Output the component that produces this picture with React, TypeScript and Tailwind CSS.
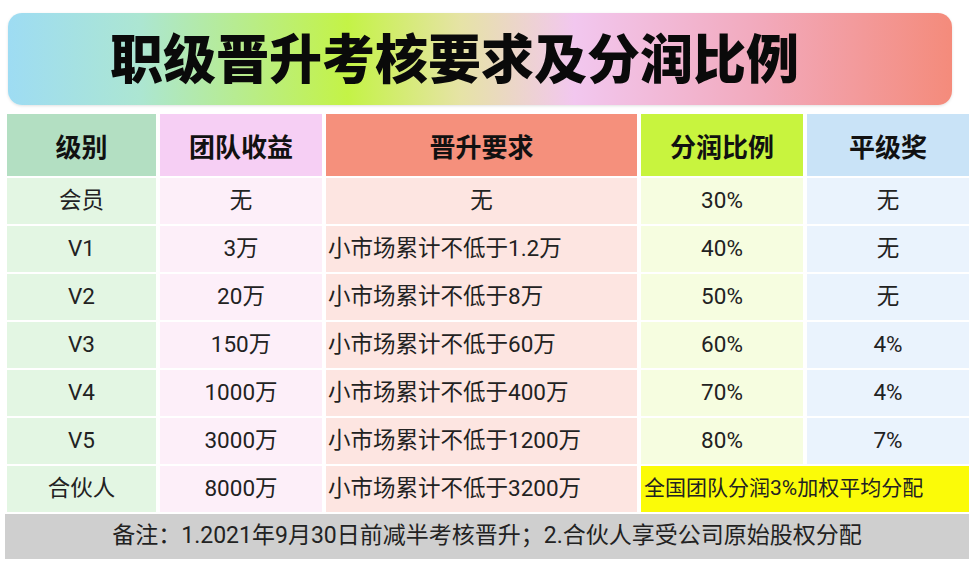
const ROWS = [
  { level: "会员", team: "无", req: "无", share: "30%", bonus: "无" },
  { level: "V1", team: "3万", req: "小市场累计不低于1.2万", share: "40%", bonus: "无" },
  { level: "V2", team: "20万", req: "小市场累计不低于8万", share: "50%", bonus: "无" },
  { level: "V3", team: "150万", req: "小市场累计不低于60万", share: "60%", bonus: "4%" },
  { level: "V4", team: "1000万", req: "小市场累计不低于400万", share: "70%", bonus: "4%" },
  { level: "V5", team: "3000万", req: "小市场累计不低于1200万", share: "80%", bonus: "7%" },
];

const HEADERS = [
  { label: "级别", cls: "bg-[#b3dfc2]" },
  { label: "团队收益", cls: "bg-[#f6cff4]" },
  { label: "晋升要求", cls: "bg-[#f5907c]" },
  { label: "分润比例", cls: "bg-[#c8f43e]" },
  { label: "平级奖", cls: "bg-[#c9e3f7]" },
];

export default function App() {
  return (
    <div className="h-[582px] w-[969px] overflow-hidden bg-white font-['Roboto','Noto_Sans_CJK_SC',sans-serif] text-[#222]">
      <div className="pl-[8px] pr-[17px] pt-[13px]">
        <div className="flex h-[92px] items-center rounded-[14px] bg-[linear-gradient(90deg,#9edcf3_0%,#ace6d2_14%,#c4f346_36%,#e6e3a6_48%,#f2c7ef_60%,#f2a9bb_80%,#f48b7b_100%)] pb-[6px] pl-[102px] shadow-[0_1px_3px_rgba(0,0,0,0.12)]">
          <h1 className="font-['Noto_Sans_CJK_SC',sans-serif] text-[53px] font-black leading-none text-[#0a0a0a]">
            职级晋升考核要求及分润比例
          </h1>
        </div>
      </div>

      <div className="mt-[9px] grid grid-cols-[149px_162px_311px_162px_1fr] grid-rows-[62px_repeat(7,46px)] gap-x-[4px] gap-y-[2px] pl-[7px]">
        {HEADERS.map((h) => (
          <div
            key={h.label}
            className={"flex items-center justify-center font-['Noto_Sans_CJK_SC',sans-serif] text-[26px] font-bold text-[#111] " + h.cls}
          >
            {h.label}
          </div>
        ))}

        {ROWS.map((r) => (
          <div key={r.level} className="contents text-[22.5px]">
            <div className="flex items-center justify-center bg-[#e3f6e3]">{r.level}</div>
            <div className="flex items-center justify-center bg-[#fdeff9]">{r.team}</div>
            <div className={"flex items-center bg-[#fde5e1] " + (r.req === "无" ? "justify-center" : "pl-[2px]")}>
              {r.req}
            </div>
            <div className="flex items-center justify-center bg-[#f6fde0]">{r.share}</div>
            <div className="flex items-center justify-center bg-[#eaf3fd]">{r.bonus}</div>
          </div>
        ))}

        <div className="flex items-center justify-center bg-[#e3f6e3] text-[22.5px]">合伙人</div>
        <div className="flex items-center justify-center bg-[#fdeff9] text-[22.5px]">8000万</div>
        <div className="flex items-center bg-[#fde5e1] pl-[2px] text-[22.5px]">小市场累计不低于3200万</div>
        <div className="col-span-2 flex items-center bg-[#fbfb08] pl-[3px] text-[21px]">
          全国团队分润3%加权平均分配
        </div>
      </div>

      <div className="ml-[5px] mt-[2px] flex h-[45px] items-center justify-center bg-[#cfcfcf] text-[23px]">
        备注：1.2021年9月30日前减半考核晋升；2.合伙人享受公司原始股权分配
      </div>
    </div>
  );
}
